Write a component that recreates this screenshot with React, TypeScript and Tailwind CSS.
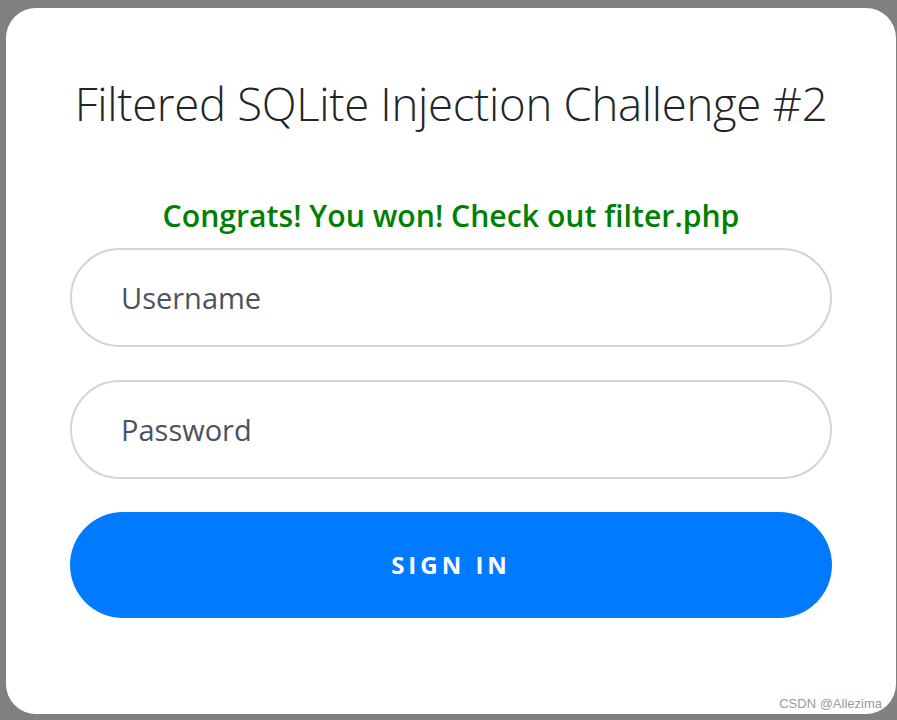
import React from "react";

export default function App() {
  return (
    <div className="w-[897px] h-[720px] bg-[#808080] pt-[8px] pl-[6px] pr-[1px] pb-[6px]" style={{ fontFamily: '"Open Sans", "Noto Sans", sans-serif' }}>
      <div className="relative h-full bg-white rounded-[30px] px-[64px] pt-[65px]">
        <h1 className="text-center text-[45.5px] font-light text-[#212529] leading-[60px] tracking-[-0.3px]">
          Filtered SQLite Injection Challenge #2
        </h1>
        <p className="mt-[63px] text-center text-[30.2px] font-semibold text-[#008000] leading-[40px]">
          Congrats! You won! Check out filter.php
        </p>
        <form className="mt-[12px] flex flex-col">
          <input
            type="text"
            placeholder="Username"
            className="h-[99px] w-full rounded-full border-2 border-[#d1d5db] px-[49px] text-[29px] text-[#495057] placeholder:text-[#4b5260] outline-none"
          />
          <input
            type="password"
            placeholder="Password"
            className="mt-[33px] h-[99px] w-full rounded-full border-2 border-[#d1d5db] px-[49px] text-[29px] text-[#495057] placeholder:text-[#4b5260] outline-none"
          />
          <button
            type="button"
            className="mt-[33px] h-[106px] w-full rounded-full bg-[#007bff] text-white text-[24px] font-bold tracking-[4px] uppercase"
          >
            Sign in
          </button>
        </form>
        <span className="absolute right-[14px] bottom-[1px] text-[13px] text-[#9a9a9a]" style={{ fontFamily: '"Liberation Sans", Arial, sans-serif' }}>
          CSDN @Allezima
        </span>
      </div>
    </div>
  );
}
